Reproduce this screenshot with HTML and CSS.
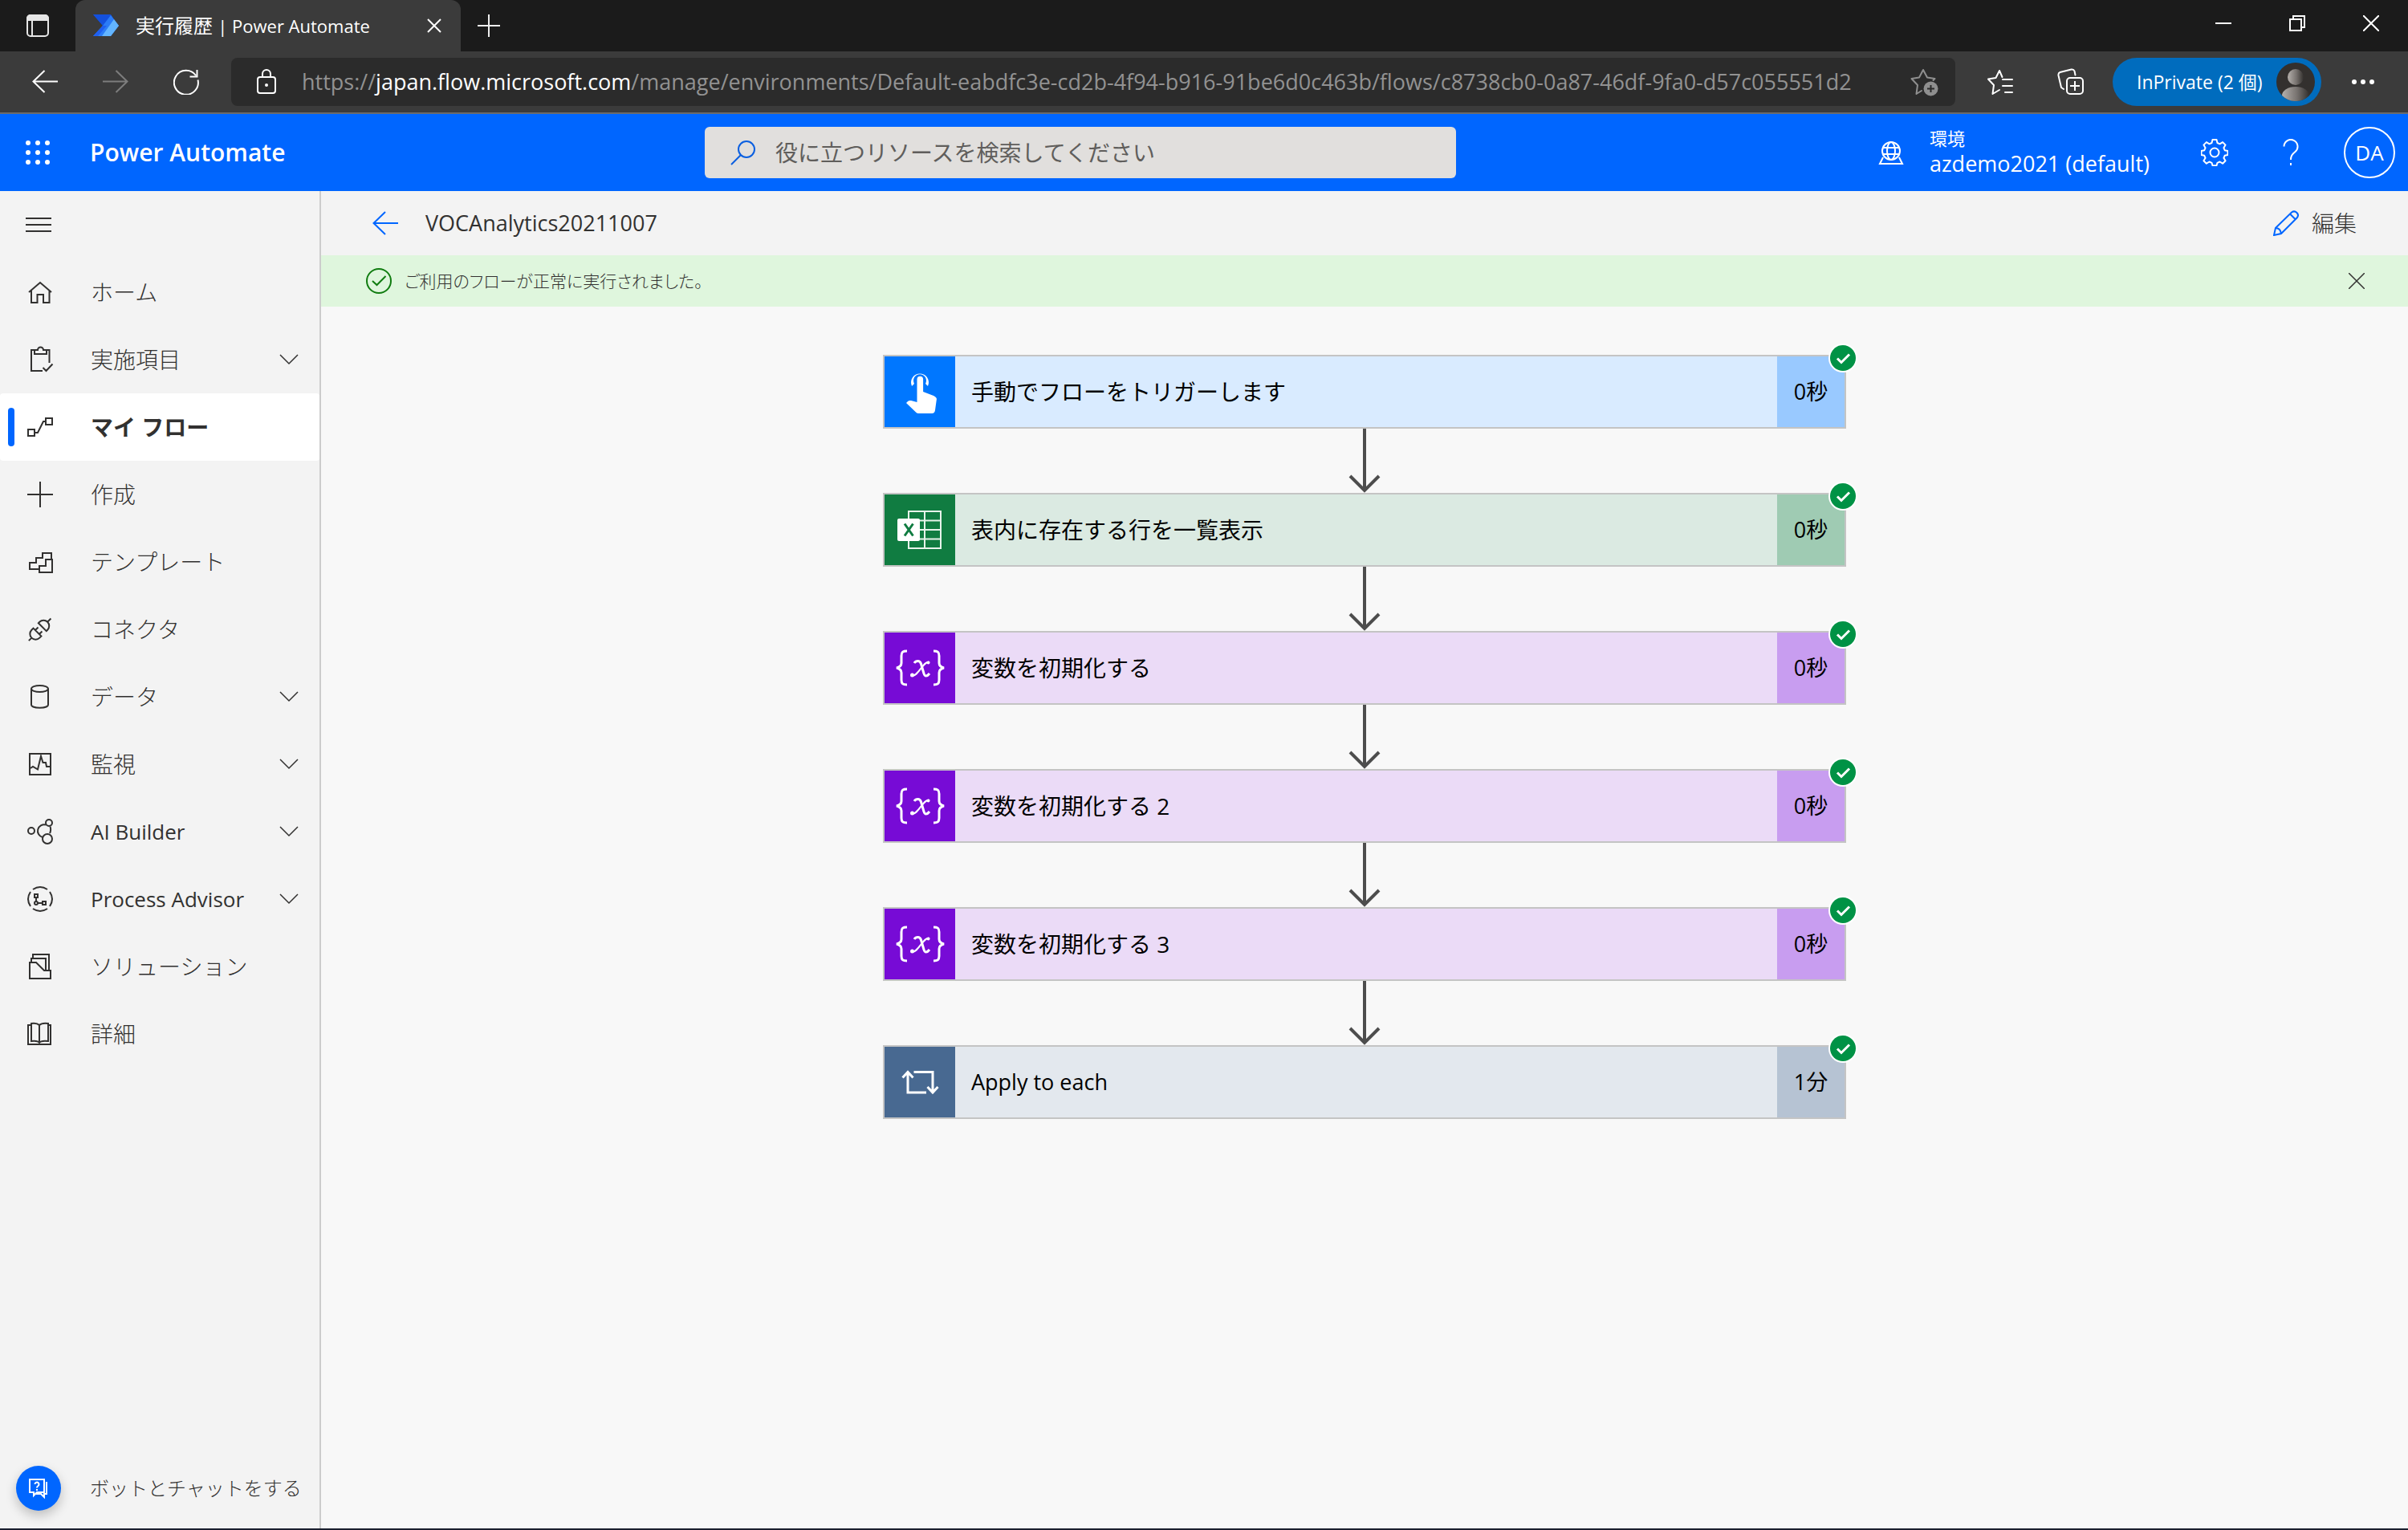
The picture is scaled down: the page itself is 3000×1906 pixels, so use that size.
FILE: index.html
```html
<!DOCTYPE html>
<html lang="ja">
<head>
<meta charset="utf-8">
<title>実行履歴 | Power Automate</title>
<link rel="stylesheet" href="styles.css">
</head>
<body>
<svg class="symbols" width="0" height="0" aria-hidden="true">
  <symbol id="check" viewBox="0 0 36 36"><circle cx="18" cy="18" r="18" fill="#fff"/><circle cx="18" cy="18" r="16" fill="#009245"/><path d="M11 18.500l5 5L26 13.500" fill="none" stroke="#fff" stroke-width="3"/></symbol>
  <symbol id="arrow" viewBox="0 0 40 80"><path d="M20 0v77M2 59l18 18 18-18" fill="none" stroke="#4d4d4d" stroke-width="4"/></symbol>
  <symbol id="chevron" viewBox="0 0 24 14"><path d="M1 1l11 11L23 1"/></symbol>
  <symbol id="variable" viewBox="0 0 88 88"><path d="M28 23c-5 0-7 1-7 6v9c0 3-2 5-6 6 4 1 6 3 6 6v9c0 5 2 6 7 6M61 23c5 0 7 1 7 6v9c0 3 2 5 6 6-4 1-6 3-6 6v9c0 5-2 6-7 6" fill="none" stroke="#fff" stroke-width="3"/><path d="M37 38c2-3 7-4 8.500 1l3.500 12c1 4 4 4 7 0" fill="none" stroke="#fff" stroke-width="3"/><path d="M56 37c-7-3-14 18-22 17" fill="none" stroke="#fff" stroke-width="2"/><circle cx="54.500" cy="37.500" r="2" fill="#fff"/><circle cx="34.500" cy="53" r="2.500" fill="#fff"/></symbol>
</svg>

<div class="titlebar">
  <button class="chrome-btn tab-actions" aria-label="タブ操作"><svg width="32" height="32" viewBox="0 0 32 32"><rect x="3" y="3" width="26" height="26" rx="4" fill="none" stroke="#e6e6e6" stroke-width="2"/><path d="M2 10V7a5 5 0 0 1 5-5h18a5 5 0 0 1 5 5v3z" fill="#e6e6e6"/><path d="M9 10v19" stroke="#e6e6e6" stroke-width="2"/></svg></button>
  <div class="tab">
    <svg class="favicon" width="32" height="28" viewBox="0 0 32 28"><path d="M0 0h22l-10 14z" fill="#0b3fc4"/><path d="M0 0h22l4 6-8 8-6 0z" fill="#1450dc"/><path d="M22 1l10 13-10 13H0L12 14z" fill="#2b7cf6"/><path d="M26 6l6 8-10 13H11z" fill="#63b5ff"/><path d="M0 27L12 14l5 0-11 13z" fill="#1f5ff0"/></svg>
    <span class="tab-title">実行履歴 <span class="tab-latin">| Power Automate</span></span>
    <button class="chrome-btn tab-close" aria-label="タブを閉じる"><svg width="18" height="18" viewBox="0 0 18 18"><path d="M1 1l16 16M17 1L1 17" stroke="#fff" stroke-width="2"/></svg></button>
  </div>
  <button class="chrome-btn new-tab" aria-label="新しいタブ"><svg width="28" height="28" viewBox="0 0 28 28"><path d="M0 14h28M14 0v28" stroke="#eee" stroke-width="2"/></svg></button>
  <div class="window-controls">
    <button class="chrome-btn" aria-label="最小化"><svg width="20" height="20" viewBox="0 0 20 20"><path d="M0 10h20" stroke="#fff" stroke-width="2"/></svg></button>
    <button class="chrome-btn" aria-label="元に戻す"><svg width="20" height="20" viewBox="0 0 20 20"><path d="M1 5h14v14H1zM5 5V1h14v14h-4" fill="none" stroke="#fff" stroke-width="2"/></svg></button>
    <button class="chrome-btn" aria-label="閉じる"><svg width="20" height="20" viewBox="0 0 20 20"><path d="M0 0l20 20M20 0L0 20" stroke="#fff" stroke-width="2"/></svg></button>
  </div>
</div>

<div class="toolbar">
  <div class="history">
    <button class="chrome-btn" aria-label="戻る"><svg width="32" height="32" viewBox="0 0 32 32"><path d="M32 15.500H1.500M15.500 2L1.500 15.500l14 13.500" fill="none" stroke="#fff" stroke-width="2"/></svg></button>
    <button class="chrome-btn" aria-label="進む"><svg width="32" height="32" viewBox="0 0 32 32"><path d="M0 15.500h30.500M16.500 2l14 13.500-14 13.500" fill="none" stroke="#7d7d7d" stroke-width="2"/></svg></button>
    <button class="chrome-btn" aria-label="更新"><svg width="32" height="32" viewBox="0 0 32 32"><path d="M30.500 13.500A15 15 0 1 1 28 8M29.500 1v8.500h-9" fill="none" stroke="#fff" stroke-width="2"/></svg></button>
  </div>
  <div class="address">
    <svg class="lock" width="26" height="32" viewBox="0 0 26 32"><rect x="2" y="10" width="22" height="20" rx="3" fill="none" stroke="#fff" stroke-width="2"/><path d="M8 10V6a5 5 0 0 1 10 0v4" fill="none" stroke="#fff" stroke-width="2"/><circle cx="13" cy="20" r="2" fill="#fff"/></svg>
    <span class="url">https://<span class="host">japan.flow.microsoft.com</span>/manage/environments/Default-eabdfc3e-cd2b-4f94-b916-91be6d0c463b/flows/c8738cb0-0a87-46df-9fa0-d57c055551d2</span>
    <button class="chrome-btn" aria-label="お気に入りに追加"><svg width="36" height="36" viewBox="0 0 36 36"><path d="M14 29l-6.500 4 1.500-11L1.500 14l9.500-1.500L16 3l5 9.500 9.500 1.500-2 2" fill="none" stroke="#8f8f8f" stroke-width="2" stroke-linejoin="round" stroke-linecap="round"/><circle cx="25.500" cy="26.500" r="9" fill="#8f8f8f"/><path d="M25.500 22v9M21 26.500h9" stroke="#2b2b2b" stroke-width="2"/></svg></button>
  </div>
  <button class="chrome-btn tool" aria-label="お気に入り"><svg width="34" height="34" viewBox="0 0 34 34"><path d="M16 27l-8.500 5 1.500-11L2 13.500l9.500-1.500L16 3l3.500 8M20 14h12M20 22h12M23 30h9" fill="none" stroke="#fff" stroke-width="2" stroke-linejoin="round" stroke-linecap="round"/></svg></button>
  <button class="chrome-btn tool" aria-label="コレクション"><svg width="34" height="34" viewBox="0 0 34 34"><path d="M8 26L5 24 1.500 9q-.500-3 2-4l14-3.500q3-.500 4 2l1 5" fill="none" stroke="#fff" stroke-width="2" stroke-linecap="round"/><rect x="12" y="12" width="20" height="20" rx="4" fill="none" stroke="#fff" stroke-width="2"/><path d="M22 16v12M16 22h12" stroke="#fff" stroke-width="2"/></svg></button>
  <button class="profile">InPrivate (2 個)
    <svg width="48" height="48" viewBox="0 0 48 48"><defs><linearGradient id="face"><stop offset="0" stop-color="#b5b0ac"/><stop offset=".550" stop-color="#77726f"/><stop offset="1" stop-color="#33302e"/></linearGradient></defs><circle cx="24" cy="24" r="24" fill="#33302e"/><circle cx="24" cy="18" r="10" fill="url(#face)"/><path d="M7 41a17 11 0 0 1 34 0a24 24 0 0 1-34 0z" fill="url(#face)"/></svg>
  </button>
  <button class="chrome-btn more" aria-label="設定など"><svg width="28" height="8" viewBox="0 0 28 8"><g fill="#fff"><circle cx="3" cy="4" r="3"/><circle cx="14" cy="4" r="3"/><circle cx="25" cy="4" r="3"/></g></svg></button>
</div>

<header class="app-header">
  <div class="brand">
    <button class="plain" aria-label="アプリ起動ツール"><svg width="32" height="32" viewBox="0 0 32 32"><g fill="#fff"><circle cx="4" cy="4" r="3"/><circle cx="16" cy="4" r="3"/><circle cx="28" cy="4" r="3"/><circle cx="4" cy="16" r="3"/><circle cx="16" cy="16" r="3"/><circle cx="28" cy="16" r="3"/><circle cx="4" cy="28" r="3"/><circle cx="16" cy="28" r="3"/><circle cx="28" cy="28" r="3"/></g></svg></button>
    <a href="#" class="brand-name">Power Automate</a>
  </div>
  <label class="search">
    <svg width="32" height="32" viewBox="0 0 32 32"><circle cx="20" cy="12" r="10" fill="none" stroke="#0a5fe0" stroke-width="2"/><path d="M13 19L1 31" stroke="#0a5fe0" stroke-width="2"/></svg>
    <input type="search" aria-label="検索" placeholder="役に立つリソースを検索してください">
  </label>
  <div class="header-actions">
    <button class="environment">
      <svg width="32" height="32" viewBox="0 0 32 32"><g fill="none" stroke="#fff" stroke-width="2"><circle cx="16" cy="14" r="11"/><ellipse cx="16" cy="14" rx="5" ry="11"/><path d="M6 10h20M6 18h20M6 22l-4 8h28l-4-8"/></g></svg>
      <span class="env-text"><span class="env-label">環境</span><span class="env-name">azdemo2021 (default)</span></span>
    </button>
    <button class="plain gear" aria-label="設定"><svg width="34" height="34" viewBox="-17 -17 34 34"><circle r="5.500" fill="none" stroke="#fff" stroke-width="2"/><path d="M-2.500-15.500h5l1 4 3 1.300 3.600-2.200 3.500 3.500-2.200 3.600 1.300 3 3.800.800v5l-3.800.800-1.300 3 2.200 3.400-3.500 3.500-3.600-2.200-3 1.300-1 3.500h-5l-1-3.500-3-1.300-3.600 2.200-3.500-3.500 2.200-3.400-1.300-3-3.800-.800v-5l3.800-.800 1.300-3-2.200-3.600 3.500-3.500 3.600 2.200 3-1.300z" fill="none" stroke="#fff" stroke-width="2" stroke-linejoin="round" transform="translate(0 -.500)"/></svg></button>
    <button class="plain" aria-label="ヘルプ"><svg width="20" height="34" viewBox="0 0 20 34"><path d="M1.500 9.500a8.500 8.500 0 1 1 14 6.500c-4 3.500-5.500 5-5.500 10" fill="none" stroke="#fff" stroke-width="2"/><rect x="9" y="30" width="2" height="3" fill="#fff"/></svg></button>
  </div>
  <button class="avatar">DA</button>
</header>

<div class="app-body">
  <nav class="sidebar">
    <button class="menu" aria-label="ナビゲーションの折りたたみ"><svg width="32" height="18" viewBox="0 0 32 18"><path d="M0 1h32M0 9h32M0 17h32" stroke="#323130" stroke-width="2"/></svg></button>
    <a href="#" class="nav-item"><svg class="icon" viewBox="0 0 32 32"><path d="M2 16L16 4l14 12M5 13.500V29h7.500V19H20v10h7.500V13.500"/></svg>ホーム</a>
    <a href="#" class="nav-item"><svg class="icon" viewBox="0 0 32 32"><path d="M9 4H5v26h14M24 4h3.500v16M9 4h4a3.500 3.500 0 0 1 7 0h4v5H9zM19.500 26l4 4 8-8.500"/></svg>実施項目<svg class="chevron"><use href="#chevron"/></svg></a>
    <a href="#" class="nav-item current" aria-current="page"><svg class="icon" viewBox="0 0 32 32"><path d="M1 19h8v8H1zM23 5h8v8h-8zM9 23h4l7-14h3"/></svg>マイ フロー</a>
    <a href="#" class="nav-item"><svg class="icon" viewBox="0 0 32 32"><path d="M0 16h32M16 0v32"/></svg>作成</a>
    <a href="#" class="nav-item"><svg class="icon" viewBox="0 0 32 32"><path d="M15 25H3v-8h8v-6h8V5h11v8M31 13h-8v8h-8v8h16z"/></svg>テンプレート</a>
    <a href="#" class="nav-item"><svg class="icon" viewBox="0 0 32 32"><g transform="rotate(-45 16 16)"><path d="M-4 16h5M11 9v14H8a7 7 0 0 1 0-14zM11 12.500h5M11 19.500h5M20 9v14h2a7 7 0 0 0 0-14zM29 16h6"/></g></svg>コネクタ</a>
    <a href="#" class="nav-item"><svg class="icon" viewBox="0 0 32 32"><path d="M5 6v20c0 5 21 5 21 0V6"/><ellipse cx="15.500" cy="6" rx="10.500" ry="4"/></svg>データ<svg class="chevron"><use href="#chevron"/></svg></a>
    <a href="#" class="nav-item"><svg class="icon" viewBox="0 0 32 32"><path d="M3 3h26v26H3zM4 21l3-2 6 3.500L17 6l2.500 8H23l1 5h5"/></svg>監視<svg class="chevron"><use href="#chevron"/></svg></a>
    <a href="#" class="nav-item latin"><svg class="icon" viewBox="0 0 32 32"><circle cx="5" cy="15" r="4"/><path d="M23 7.500A8 8 0 1 0 19 23M28.500 9.500q1.500 5-.500 8.500"/><circle cx="27" cy="5" r="4"/><circle cx="25" cy="25" r="6"/></svg>AI Builder<svg class="chevron"><use href="#chevron"/></svg></a>
    <a href="#" class="nav-item latin"><svg class="icon" viewBox="0 0 32 32"><path d="M7 4Q16-2 25 4M7 28q9 6 18 0M4 7q-6 9 0 18M28 7q6 9 0 18M9 10h4v4H9zM11 14v5M13 21h6M19 19h4v4h-4z"/><circle cx="11" cy="21" r="2"/></svg>Process Advisor<svg class="chevron"><use href="#chevron"/></svg></a>
    <a href="#" class="nav-item"><svg class="icon" viewBox="0 0 32 32"><path d="M3 11h8l10 10h8v10H3zM5 11V6h18v15M7 6V1h20v20"/></svg>ソリューション</a>
    <a href="#" class="nav-item"><svg class="icon" viewBox="0 0 32 32"><path d="M5 5H1v24h28V5h-3M15 5v22M15 5Q12 2 5 3v22q8-1 10 2 2-3 11-2V3q-8-1-11 2z"/></svg>詳細</a>
    <button class="chat"><span class="chat-badge"><svg width="26" height="26" viewBox="0 0 26 26"><g fill="none" stroke="#fff" stroke-width="2"><path d="M2 2h18v16h-9l-4 4v-4H2zM23 5v15h-3v4l-4-4h-6"/><path d="M8.500 8a2.500 2.500 0 1 1 4 2q-1.500 1-1.500 2.500M11 14v2"/></g></svg></span>ボットとチャットをする</button>
  </nav>

  <main class="content">
    <div class="page-bar">
      <button class="plain" aria-label="戻る"><svg width="32" height="32" viewBox="0 0 32 32"><path d="M32 16H1.500M16 2L1.500 16 16 30" fill="none" stroke="#06f" stroke-width="2"/></svg></button>
      <h1 class="page-title">VOCAnalytics20211007</h1>
      <button class="edit"><svg width="32" height="32" viewBox="0 0 32 32"><path d="M1 31l2-9L23 2.500q3.500-2.500 6.500.500t0 6.500L10 29zM3 22q6 0 7 7M21 4.500l7 7" fill="none" stroke="#06f" stroke-width="2"/></svg>編集</button>
    </div>
    <div class="message" role="status">
      <svg width="32" height="32" viewBox="0 0 32 32"><circle cx="16" cy="16" r="15" fill="none" stroke="#107c10" stroke-width="2"/><path d="M8 16l5.500 5L24.500 10" fill="none" stroke="#107c10" stroke-width="2"/></svg>
      <span class="message-text">ご利用のフローが正常に実行されました。</span>
      <button class="plain" aria-label="閉じる"><svg width="20" height="20" viewBox="0 0 20 20"><path d="M0 0l20 20M20 0L0 20" stroke="#323130" stroke-width="1.500"/></svg></button>
    </div>

    <ol class="flow">
      <li class="step trigger"><button class="card"><span class="card-icon"><svg width="88" height="88" viewBox="0 0 88 88"><path d="M34 37a11 11 0 1 1 20 0l-3-3a8 8 0 1 0-14 0z" fill="#fff"/><path d="M40.500 28.500a3.800 3.800 0 0 1 7.600 0V44l13 5q4.500 2 3.700 5l-1.800 13q-.500 4-4 4H42q-2 0-3.500-2L27 58l2-2q1.500-1.500 4-1l7.500 2z" fill="#fff"/></svg></span><span class="card-title">手動でフローをトリガーします</span><span class="time">0秒</span></button><svg class="check"><use href="#check"/></svg><svg class="arrow"><use href="#arrow"/></svg></li>
      <li class="step excel"><button class="card"><span class="card-icon"><svg width="88" height="88" viewBox="0 0 88 88"><path d="M30 21h40v46H30zM50 21v46M30 32.500h40M30 44h40M30 55.500h40" fill="none" stroke="#e6f3ea" stroke-width="2"/><rect x="16" y="30" width="28" height="28" rx="2" fill="#fff"/><path d="M25 36.500l10.500 15M35.500 36.500L25 51.500" stroke="#107c41" stroke-width="3"/></svg></span><span class="card-title">表内に存在する行を一覧表示</span><span class="time">0秒</span></button><svg class="check"><use href="#check"/></svg><svg class="arrow"><use href="#arrow"/></svg></li>
      <li class="step variable"><button class="card"><span class="card-icon"><svg width="88" height="88"><use href="#variable"/></svg></span><span class="card-title">変数を初期化する</span><span class="time">0秒</span></button><svg class="check"><use href="#check"/></svg><svg class="arrow"><use href="#arrow"/></svg></li>
      <li class="step variable"><button class="card"><span class="card-icon"><svg width="88" height="88"><use href="#variable"/></svg></span><span class="card-title">変数を初期化する 2</span><span class="time">0秒</span></button><svg class="check"><use href="#check"/></svg><svg class="arrow"><use href="#arrow"/></svg></li>
      <li class="step variable"><button class="card"><span class="card-icon"><svg width="88" height="88"><use href="#variable"/></svg></span><span class="card-title">変数を初期化する 3</span><span class="time">0秒</span></button><svg class="check"><use href="#check"/></svg><svg class="arrow"><use href="#arrow"/></svg></li>
      <li class="step loop"><button class="card"><span class="card-icon"><svg width="88" height="88" viewBox="0 0 88 88"><path d="M52 57H29V32M22.500 38.500L29 31.500l6.500 7M36.500 31.500H60V56M53.500 50l6.500 7 6.500-7" fill="none" stroke="#fff" stroke-width="3"/></svg></span><span class="card-title latin">Apply to each</span><span class="time">1分</span></button><svg class="check"><use href="#check"/></svg></li>
    </ol>
  </main>
</div>
</body>
</html>
```
FILE: styles.css
```css
* { box-sizing: border-box; }

body {
  margin: 0;
  min-height: 100vh;
  display: flex;
  flex-direction: column;
  font-family: "Open Sans", "Noto Sans CJK JP", sans-serif;
  font-size: 28px;
  line-height: 40px;
  color: #323130;
  background: #f8f8f8;
  border-bottom: 2px solid #1a1f2e;
}

button {
  font: inherit;
  color: inherit;
  padding: 0;
  border: 0;
  background: none;
}

a { color: inherit; text-decoration: none; }
svg { display: block; flex: none; }
.symbols { position: absolute; }

.chrome-btn, .plain { display: flex; align-items: center; justify-content: center; }

/* Browser tab strip */
.titlebar {
  display: flex;
  height: 64px;
  background: #1b1b1b;
  color: #fff;
}

.tab-actions { width: 94px; }

.tab {
  display: flex;
  align-items: center;
  width: 480px;
  padding: 0 24px 0 22px;
  gap: 21px;
  background: #3b3b3b;
  border-radius: 12px 12px 0 0;
  font-size: 24px;
}

.tab-title { flex: 1; white-space: nowrap; }
.tab-latin { font-size: 22px; }
.new-tab { width: 70px; }

.window-controls {
  display: flex;
  gap: 72px;
  margin-left: auto;
  padding-right: 36px;
  height: 58px;
}

/* Browser toolbar */
.toolbar {
  display: flex;
  align-items: center;
  height: 78px;
  padding: 0 42px 0 40px;
  background: #3b3b3b;
  border-bottom: 2px solid #6b6b6b;
  color: #fff;
}

.history { display: flex; gap: 56px; margin-right: 40px; }

.address {
  display: flex;
  align-items: center;
  flex: 1;
  min-width: 0;
  height: 60px;
  padding: 0 20px 0 31px;
  background: #2b2b2b;
  border-radius: 8px;
}

.lock { margin-right: 31px; }

.url {
  flex: 1;
  min-width: 0;
  overflow: hidden;
  white-space: nowrap;
  font-size: 27px;
  color: #929292;
}

.host { color: #fff; }
.tool { margin-left: 24px; width: 64px; }

.profile {
  display: flex;
  align-items: center;
  justify-content: space-between;
  width: 260px;
  height: 60px;
  margin: 0 38px 0 20px;
  padding: 0 8px 0 30px;
  border-radius: 30px;
  background: #006cbe;
  font-size: 23px;
  white-space: nowrap;
}

/* Application header */
.app-header {
  display: flex;
  align-items: center;
  height: 96px;
  padding-right: 16px;
  background: #06f;
  color: #fff;
}

.brand {
  display: flex;
  align-items: center;
  gap: 49px;
  width: 878px;
  padding-left: 31px;
}

.brand-name { font-size: 30px; font-weight: 600; }

.search {
  display: flex;
  align-items: center;
  gap: 24px;
  width: 936px;
  height: 64px;
  padding: 0 32px;
  background: #e1dfdd;
  border-radius: 6px;
}

.search input {
  flex: 1;
  min-width: 0;
  padding: 0;
  border: 0;
  outline: 0;
  background: none;
  font: inherit;
  color: #323130;
}

.search input::placeholder { color: #605e5c; opacity: 1; }

.header-actions {
  display: flex;
  align-items: center;
  gap: 64px;
  margin-left: auto;
  margin-right: 56px;
}

.environment { display: flex; align-items: center; gap: 32px; text-align: left; }
.env-text { display: flex; flex-direction: column; }
.env-label { font-size: 22px; line-height: 28px; }
.env-name { font-size: 27px; line-height: 36px; white-space: nowrap; }
.gear { margin-right: 4px; }

.avatar {
  width: 64px;
  height: 64px;
  border: 2px solid #fff;
  border-radius: 50%;
  font-size: 26px;
}

/* Layout below the header */
.app-body { display: flex; flex: 1; }

.sidebar {
  display: flex;
  flex-direction: column;
  width: 400px;
  background: #f3f3f3;
  border-right: 2px solid #ccc;
}

.menu {
  display: flex;
  align-items: center;
  height: 84px;
  padding-left: 32px;
}

.nav-item {
  position: relative;
  display: flex;
  align-items: center;
  height: 84px;
  padding: 0 26px 0 34px;
  border-radius: 4px;
  font-weight: 300;
}

.icon {
  width: 32px;
  height: 32px;
  margin-right: 47px;
  overflow: visible;
  fill: none;
  stroke: #323130;
  stroke-width: 2;
}

.chevron {
  width: 24px;
  height: 14px;
  margin-left: auto;
  fill: none;
  stroke: #323130;
  stroke-width: 1.5;
}

.current { background: #fff; font-weight: 700; }
.nav-item.latin { font-size: 26px; font-weight: 400; }

.current::before {
  content: "";
  position: absolute;
  left: 10px;
  top: 18px;
  width: 8px;
  height: 48px;
  border-radius: 4px;
  background: #06f;
}

.chat {
  display: flex;
  align-items: center;
  gap: 36px;
  margin-top: auto;
  padding: 0 0 22px 20px;
  font-size: 24px;
  font-weight: 300;
  white-space: nowrap;
}

.chat-badge {
  display: flex;
  align-items: center;
  justify-content: center;
  width: 56px;
  height: 56px;
  border-radius: 50%;
  background: #06f;
  box-shadow: 0 6px 14px rgba(0, 0, 0, .22);
}

.content { flex: 1; min-width: 0; }

.page-bar {
  display: flex;
  align-items: center;
  height: 80px;
  padding: 0 64px;
  background: #f3f3f3;
}

.page-title {
  margin: 0 auto 0 34px;
  font-size: 27px;
  font-weight: 400;
}

.edit { display: flex; align-items: center; gap: 16px; font-weight: 300; }

.message {
  display: flex;
  align-items: center;
  gap: 16px;
  height: 64px;
  padding: 0 54px 0 56px;
  background: #dff6dd;
}

.message-text {
  flex: 1;
  font-size: 21px;
  font-weight: 300;
  font-feature-settings: "palt";
}

/* Run steps */
.flow {
  display: flex;
  flex-direction: column;
  align-items: center;
  gap: 80px;
  margin: 0;
  padding: 60px 0;
  list-style: none;
}

.step { position: relative; width: 1200px; max-width: 100%; }

.card {
  display: flex;
  width: 100%;
  height: 92px;
  border: 2px solid #c4c4c4;
  color: #000;
  text-align: left;
}

.card-icon { display: flex; width: 88px; height: 88px; }
.card-title { flex: 1; align-self: center; padding-left: 20px; }
.card-title.latin { font-size: 27px; }

.time {
  display: flex;
  align-items: center;
  justify-content: center;
  width: 84px;
  height: 88px;
  font-size: 27px;
}

.trigger .card { background: #d9ebff; }
.trigger .card-icon { background: #0077ff; }
.trigger .time { background: #99c9ff; }
.excel .card { background: #dbeae2; }
.excel .card-icon { background: #107c41; }
.excel .time { background: #9fcbb3; }
.variable .card { background: #ebdbf7; }
.variable .card-icon { background: #770bd6; }
.variable .time { background: #c89df0; }
.loop .card { background: #e3e8ee; }
.loop .card-icon { background: #486991; }
.loop .time { background: #b6c3d3; }

/* Success badge on the corner of a card */
.check {
  position: absolute;
  top: -14px;
  right: -14px;
  width: 36px;
  height: 36px;
}

/* Connector down to the next card */
.arrow {
  position: absolute;
  top: 100%;
  left: 50%;
  width: 40px;
  height: 80px;
  margin-left: -20px;
}
```
